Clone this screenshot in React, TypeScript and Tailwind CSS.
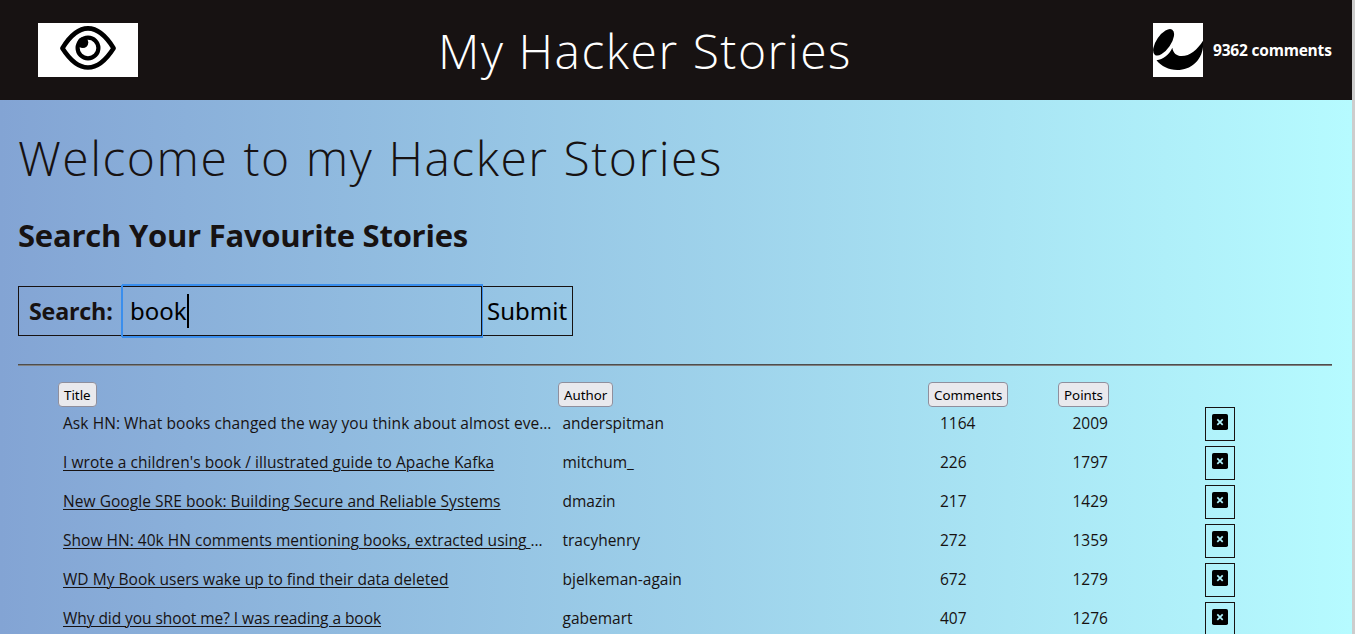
import type { ReactNode } from "react";

type Story = { title: string; cut?: boolean; link: boolean; author: string; comments: number; points: number; tracking: string };

const stories: Story[] = [
  { title: "Ask HN: What books changed the way you think about almost eve", cut: true, link: false, author: "anderspitman", comments: 1164, points: 2009, tracking: "tracking-[0.07px]" },
  { title: "I wrote a children's book / illustrated guide to Apache Kafka", link: true, author: "mitchum_", comments: 226, points: 1797, tracking: "tracking-[0.055px]" },
  { title: "New Google SRE book: Building Secure and Reliable Systems", link: true, author: "dmazin", comments: 217, points: 1429, tracking: "tracking-[0.055px]" },
  { title: "Show HN: 40k HN comments mentioning books, extracted using ", cut: true, link: true, author: "tracyhenry", comments: 272, points: 1359, tracking: "tracking-[0.03px]" },
  { title: "WD My Book users wake up to find their data deleted", link: true, author: "bjelkeman-again", comments: 672, points: 1279, tracking: "tracking-[0.035px]" },
  { title: "Why did you shoot me? I was reading a book", link: true, author: "gabemart", comments: 407, points: 1276, tracking: "tracking-[-0.055px]" },
];

function EyeLogo() {
  return (
    <svg className="block h-[54px] w-[100px] bg-white" viewBox="0 0 100 54" fill="none" stroke="#000">
      <path d="M24.4 25.2C31 14.5 40 5.4 50 5.4S69 14.5 75.600 25.2C69 35.500 60 44.500 50 44.500S31 35.500 24.400 25.200Z" strokeWidth="4.600" strokeLinejoin="round" />
      <circle cx="50" cy="25" r="10.4" strokeWidth="4.2" />
      <circle cx="44.900" cy="19.600" r="5.400" fill="#000" stroke="none" />
    </svg>
  );
}

function SwooshLogo() {
  return (
    <svg className="block h-[54px] w-[50px] bg-white" viewBox="0 0 50 54">
      <ellipse cx="10.6" cy="19.3" rx="15.3" ry="7.2" transform="rotate(-55.600 10.600 19.300)" />
      <path d="M3.500 37.300C10 36.500 16.500 31.500 19.300 24.700C20.200 30 23.500 33 28.700 33C37 33 44.500 26.500 50 17.700V24C48.500 37.500 38 47 24.300 47C15.500 47 8.500 43.300 3.500 37.300Z" />
    </svg>
  );
}

function DeleteIcon() {
  return (
    <svg className="block size-4" viewBox="0 0 16 16">
      <rect width="16" height="16" rx="1.8" />
      <path d="M5.300 5.400L10.700 10.800M10.700 5.400L5.300 10.800" stroke="#aff1fb" strokeWidth="1.700" />
    </svg>
  );
}

function SortButton({ children }: { children: ReactNode }) {
  return (
    <button className="h-[25px] rounded-[4px] border border-[#8f8f9d] bg-[#e9e9ed] px-[5px] pt-px font-['Noto_Sans',sans-serif] text-[13.333px] leading-[23px] text-black">
      {children}
    </button>
  );
}

export default function App() {
  return (
    <div className="flex h-[634px] overflow-hidden font-['Open_Sans',sans-serif] text-[#171212]">
      <div className="w-[1352px] bg-linear-to-r/srgb from-[#83a4d4] to-[#b6fbff]">
        <header className="flex h-[100px] items-center justify-between bg-[#171212] pr-5 pl-[38px] text-white">
          <EyeLogo />
          <h1 className="-ml-[1px] pt-px text-5xl leading-[60px] font-light tracking-[1.520px] whitespace-nowrap">My Hacker Stories</h1>
          <div className="flex w-[179px] items-center gap-[10px]">
            <SwooshLogo />
            <span className="text-[15.500px] leading-6 font-bold tracking-[-0.2px] whitespace-nowrap">9362 comments</span>
          </div>
        </header>

        <main className="px-[18px] pr-5">
          <h2 className="pt-[28px] text-5xl leading-[60px] font-light tracking-[1.500px] [word-spacing:1.200px] whitespace-nowrap">Welcome to my Hacker Stories</h2>
          <h3 className="pt-[27px] text-[31px] leading-10 font-bold tracking-[-0.240px]">Search Your Favourite Stories</h3>

          <form className="mt-[31px] flex h-[50px] w-[555px] border border-[#171212]">
            <label className="w-[104px] pl-[10px] text-[23.250px] leading-[48px] font-bold tracking-[-0.2px]">Search:</label>
            <div className="z-10 -my-px flex h-[50px] w-[359px] items-center border-y border-r border-[#171212] border-t-[#3a8eed] pl-[7px] font-['Noto_Sans',sans-serif] text-2xl text-black shadow-[0_-1px_0_1px_#3a8eed,0_1px_0_1px_#3a8eed,-1px_0_0_1px_#3a8eed] border-t-[#171212]">
              book
              <span className="h-[34px] w-[2px] bg-black" />
            </div>
            <button className="pl-[5px] font-['Noto_Sans',sans-serif] text-2xl leading-[48px] text-black">Submit</button>
          </form>

          <div className="mt-7 h-[2px] border-t border-b border-t-[#4d4d4d] border-b-[#808080]" />

          <div className="mt-4 grid grid-cols-[500px_370px_130px_1fr] justify-items-start pl-10">
            <SortButton>Title</SortButton>
            <SortButton>Author</SortButton>
            <SortButton>Comments</SortButton>
            <SortButton>Points</SortButton>
          </div>

          <ul className="text-[15.500px] leading-6">
            {stories.map((s) => (
              <li key={s.title} className="grid h-[39px] grid-cols-[499.500px_377.500px_132.500px_132.500px_30px] pl-[45px]">
                <span className={`pt-1 whitespace-pre ${s.tracking}`}>
                  <span className={s.link ? "underline decoration-1 underline-offset-2" : ""}>{s.title}</span>
                  {s.cut && "…"}
                </span>
                <span className="pt-1">{s.author}</span>
                <span className="pt-1">{s.comments}</span>
                <span className="pt-1">{s.points}</span>
                <button className="flex h-[34px] w-[30px] justify-center border border-[#171212] pt-[6px] text-black">
                  <DeleteIcon />
                </button>
              </li>
            ))}
          </ul>
        </main>
      </div>
      <div className="flex-1 bg-[#cdcdcd]" />
    </div>
  );
}
